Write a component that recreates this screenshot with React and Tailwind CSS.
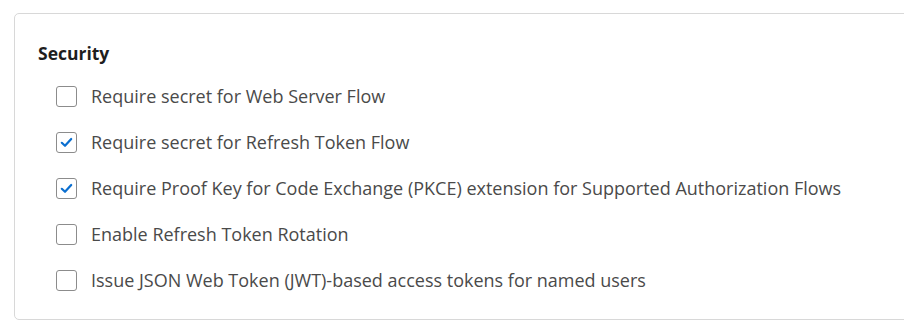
import { useState } from "react"

const options = [
    { label: "Require secret for Web Server Flow", checked: false },
    { label: "Require secret for Refresh Token Flow", checked: true },
    { label: "Require Proof Key for Code Exchange (PKCE) extension for Supported Authorization Flows", checked: true },
    { label: "Enable Refresh Token Rotation", checked: false },
    { label: "Issue JSON Web Token (JWT)-based access tokens for named users", checked: false },
]

function Checkbox({ checked, onChange }) {
    return (
        <button
            onClick={onChange}
            className="w-[21px] h-[21px] rounded-[3px] border border-[#8c8c8c] bg-white flex items-center justify-center shrink-0">
            {checked && (
                <svg width="13" height="11" viewBox="0 0 13 11">
                    <path d="M1.8 5.8 L5 8.8 L11.2 2" fill="none" stroke="#0b6fd0" strokeWidth="2.2" strokeLinecap="round" strokeLinejoin="round" />
                </svg>
            )}
        </button>
    )
}

export default function App() {
    const [values, setValues] = useState(options.map(o => o.checked))

    return (
        <div className="w-[904px] h-[328px] overflow-hidden bg-white pt-[13px] pl-[14px]" style={{ fontFamily: '"Open Sans", "Noto Sans", sans-serif' }}>
            <div className="w-[1000px] border border-[#d8d8d8] rounded-[5px] pl-[23px] pt-[27px] pb-[16px]">
                <h2 className="text-[17.5px] leading-6 font-bold text-[#1e1e1e]">
                    Security
                </h2>
                <div className="mt-2 pl-[18px] flex flex-col">
                    {options.map((o, i) => (
                        <label key={i} className="h-[46px] flex items-center gap-[14px] text-[18px] text-[#4a4a4a]">
                            <Checkbox checked={values[i]} onChange={() => {
                                setValues(values.map((v, j) => j == i ? !v : v))
                            }} />
                            {o.label}
                        </label>
                    ))}
                </div>
            </div>
        </div>
    )
}
